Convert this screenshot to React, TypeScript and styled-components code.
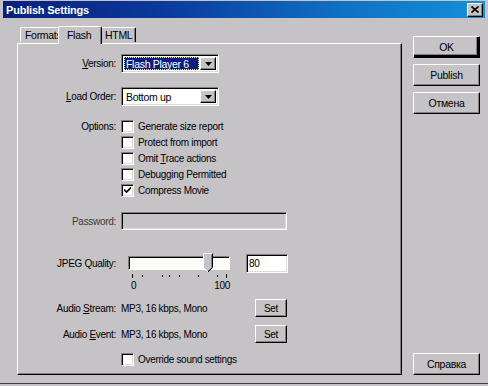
import styled, { createGlobalStyle } from "styled-components";

const GlobalStyle = createGlobalStyle`
    html, body {
        margin: 0;
        padding: 0;
        background: #c5c3c6;
    }
    body {
        font-family: "Liberation Sans", Arial, sans-serif;
        font-size: 10px;
        letter-spacing: -0.3px;
        color: #000;
    }
`

const Window = styled.div`
    width: 488px;
    height: 386px;
    box-sizing: border-box;
    background: #c5c3c6;
    padding: 1px 3px 3px 3px;
    box-shadow: inset 0 -2px #c5c3c6, inset 0 -3px #404040;
    display: flex;
    flex-direction: column;
    overflow: hidden;
`
const TitleBar = styled.div`
    height: 17px;
    flex: 0 0 17px;
    background: linear-gradient(to right, #08207c 0%, #0a3c9e 35%, #1070c4 70%, #1290da 100%);
    display: flex;
    align-items: center;
    padding: 0 2px 0 3px;
`
const Title = styled.div`
    color: #fff;
    font-weight: bold;
    font-size: 11px;
    letter-spacing: -0.2px;
    flex: 1;
`
const CloseBtn = styled.div`
    width: 16px;
    height: 14px;
    box-sizing: border-box;
    background: #c5c3c6;
    border: 1px solid;
    border-color: #fff #000 #000 #fff;
    box-shadow: inset -1px -1px #808080;
    display: flex;
    align-items: center;
    justify-content: center;
`
const Body = styled.div`
    flex: 1;
    display: flex;
    padding: 7px 5px 8px 14px;
    gap: 11px;
`
const LeftCol = styled.div`
    width: 385px;
    display: flex;
    flex-direction: column;
`
const Tabs = styled.div`
    display: flex;
    align-items: flex-end;
    height: 18px;
    padding-left: 3px;
    position: relative;
    z-index: 1;
`
const Tab = styled.div<{ $active?: boolean; $w: number }>`
    width: ${p => p.$w}px;
    height: ${p => (p.$active ? 18 : 15)}px;
    box-sizing: border-box;
    margin-bottom: ${p => (p.$active ? -1 : 1)}px;
    margin-left: ${p => (p.$active ? -2 : 0)}px;
    margin-right: ${p => (p.$active ? -2 : 0)}px;
    background: #c5c3c6;
    border: 1px solid;
    border-bottom: none;
    border-color: #fff #000 transparent #fff;
    box-shadow: inset -1px 0 #808080;
    border-radius: 2px 2px 0 0;
    padding: ${p => (p.$active ? "2px 0 0 8px" : "1px 0 0 4px")};
    white-space: nowrap;
    font-size: 10.5px;
    position: relative;
    z-index: ${p => (p.$active ? 2 : 1)};
`
const Panel = styled.div`
    flex: 1;
    box-sizing: border-box;
    border: 1px solid;
    border-color: #fff #000 #000 #fff;
    box-shadow: inset -1px -1px #808080;
    display: flex;
    flex-direction: column;
`
const Row = styled.div<{ $top: number; $h: number }>`
    display: flex;
    align-items: center;
    margin-top: ${p => p.$top}px;
    height: ${p => p.$h}px;
    gap: 4px;
`
const TopRow = styled(Row)`
    align-items: flex-start;
`
const Label = styled.div<{ $dim?: boolean }>`
    width: 99px;
    flex: 0 0 99px;
    text-align: right;
    white-space: nowrap;
    color: ${p => (p.$dim ? "#3a3a3a" : "#000")};
    padding-right: 1px;
    box-sizing: border-box;
`
const TopLabel = styled(Label)`
    line-height: 14px;
`
const Field = styled.div<{ $w: number; $h: number; $bg?: string }>`
    width: ${p => p.$w}px;
    height: ${p => p.$h}px;
    box-sizing: border-box;
    background: ${p => p.$bg || "#fff"};
    border: 1px solid;
    border-color: #808080 #fff #fff #808080;
    box-shadow: inset 1px 1px #000, inset -1px -1px #dcdcdc;
    display: flex;
    align-items: center;
    padding: 2px;
    white-space: nowrap;
`
const NumField = styled(Field)`
    margin-left: 12px;
`
const SelectText = styled.div<{ $focus?: boolean }>`
    flex: 1;
    height: 100%;
    box-sizing: border-box;
    display: flex;
    align-items: center;
    padding-left: 2px;
    color: ${p => (p.$focus ? "#fff" : "#000")};
    background: ${p => (p.$focus ? "#0a1e82" : "transparent")};
    outline: ${p => (p.$focus ? "1px dotted #e8e8a0" : "none")};
    outline-offset: -1px;
    font-size: 10.5px;
`
const ArrowBtn = styled.div`
    width: 16px;
    height: 100%;
    box-sizing: border-box;
    margin-left: 1px;
    background: #c5c3c6;
    border: 1px solid;
    border-color: #fff #000 #000 #fff;
    box-shadow: inset -1px -1px #808080;
    display: flex;
    align-items: center;
    justify-content: center;
`
const CheckList = styled.div`
    display: flex;
    flex-direction: column;
`
const CheckRow = styled.div`
    display: flex;
    align-items: flex-start;
    height: 16px;
    gap: 4px;
    line-height: 14px;
    white-space: nowrap;
`
const Box = styled.div`
    width: 13px;
    height: 13px;
    flex: 0 0 13px;
    box-sizing: border-box;
    background: #fff;
    border: 1px solid;
    border-color: #808080 #fff #fff #808080;
    box-shadow: inset 1px 1px #000, inset -1px -1px #dcdcdc;
    display: flex;
    align-items: center;
    justify-content: center;
`
const SliderWrap = styled.div`
    margin-left: 7px;
    width: 102px;
    height: 20px;
    position: relative;
    display: flex;
    align-items: center;
`
const Track = styled.div`
    width: 102px;
    height: 14px;
    box-sizing: border-box;
    background: #fbfbf8;
    border: 1px solid;
    border-color: #808080 #fff #fff #808080;
    box-shadow: inset 1px 1px #000;
`
const Thumb = styled.svg`
    position: absolute;
    left: 75px;
    top: 0;
`
const Scale = styled.div`
    margin-left: 110px;
    margin-top: 1px;
    width: 104px;
    display: flex;
    flex-direction: column;
`
const ScaleLabels = styled.div`
    display: flex;
    justify-content: space-between;
    padding: 0 2px 0 3px;
    line-height: 11px;
`
const Value = styled.div`
    width: 130px;
    flex: 0 0 130px;
    white-space: nowrap;
    margin-top: 1px;
`
const SmallBtn = styled.div`
    width: 32px;
    height: 18px;
    box-sizing: border-box;
    background: #c5c3c6;
    border: 1px solid;
    border-color: #fff #000 #000 #fff;
    box-shadow: inset -1px -1px #808080;
    display: flex;
    align-items: center;
    justify-content: center;
`
const RightCol = styled.div`
    width: 67px;
    padding-top: 11px;
    display: flex;
    flex-direction: column;
    gap: 6px;
`
const Button = styled.div<{ $default?: boolean; $bottom?: boolean }>`
    height: 22px;
    flex: 0 0 22px;
    box-sizing: border-box;
    background: #c5c3c6;
    border: 1px solid;
    border-color: #fff #000 #000 #fff;
    box-shadow: ${p => (p.$default ? "inset -2px -2px #000, inset -3px -3px #808080" : "inset -1px -1px #808080")};
    display: flex;
    align-items: center;
    justify-content: center;
    font-size: 10.5px;
    margin-top: ${p => (p.$bottom ? "auto" : "0")};
`

function Arrow() {
    return (
        <svg width="7" height="4" viewBox="0 0 7 4">
            <path d="M0 0h7L3.5 4z" fill="#000" />
        </svg>
    )
}

function Check({ checked }: { checked?: boolean }) {
    return (
        <Box>
            {checked && (
                <svg width="7" height="7" viewBox="0 0 7 7">
                    <path d="M0 2.5l2.5 2.5L7 0.5" stroke="#000" strokeWidth="1.6" fill="none" />
                </svg>
            )}
        </Box>
    )
}

const options = [
    { text: <>Generate size report</>, checked: false },
    { text: <>Protect from import</>, checked: false },
    { text: <>Omit <u>T</u>race actions</>, checked: false },
    { text: <>Debugging Permitted</>, checked: false },
    { text: <>Compress Movie</>, checked: true },
]

const ticks = [4, 14, 34, 41, 51, 70, 89, 98]

export default function App() {
    return (
        <>
            <GlobalStyle />
            <Window>
                <TitleBar>
                    <Title>Publish Settings</Title>
                    <CloseBtn>
                        <svg width="8" height="7" viewBox="0 0 8 7">
                            <path d="M0.5 0.5l7 6M7.5 0.5l-7 6" stroke="#000" strokeWidth="1.6" />
                        </svg>
                    </CloseBtn>
                </TitleBar>
                <Body>
                    <LeftCol>
                        <Tabs>
                            <Tab $w={40}>Formats</Tab>
                            <Tab $w={44} $active>Flash</Tab>
                            <Tab $w={36}>HTML</Tab>
                        </Tabs>
                        <Panel>
                            <Row $top={10} $h={19}>
                                <Label><u>V</u>ersion:</Label>
                                <Field $w={98} $h={19}>
                                    <SelectText $focus>Flash Player 6</SelectText>
                                    <ArrowBtn><Arrow /></ArrowBtn>
                                </Field>
                            </Row>
                            <Row $top={14} $h={19}>
                                <Label><u>L</u>oad Order:</Label>
                                <Field $w={98} $h={19}>
                                    <SelectText>Bottom up</SelectText>
                                    <ArrowBtn><Arrow /></ArrowBtn>
                                </Field>
                            </Row>
                            <TopRow $top={14} $h={80}>
                                <TopLabel>Options:</TopLabel>
                                <CheckList>
                                    {options.map((o, i) => (
                                        <CheckRow key={i}>
                                            <Check checked={o.checked} />
                                            <span>{o.text}</span>
                                        </CheckRow>
                                    ))}
                                </CheckList>
                            </TopRow>
                            <Row $top={12} $h={18}>
                                <Label $dim>Password:</Label>
                                <Field $w={166} $h={18} $bg="#c5c3c6" />
                            </Row>
                            <Row $top={23} $h={20}>
                                <Label>JPEG Quality:</Label>
                                <SliderWrap>
                                    <Track />
                                    <Thumb width="10" height="20" viewBox="0 0 10 20">
                                        <path d="M0.5 0.5h9v14l-4.5 4.5l-4.5-4.5z" fill="#c5c3c6" />
                                        <path d="M0.5 15V0.5h9" stroke="#fff" fill="none" />
                                        <path d="M9.5 0.5v14l-4.5 4.5" stroke="#000" fill="none" />
                                        <path d="M8.5 1.5v13l-3.5 3.5" stroke="#808080" fill="none" />
                                        <path d="M0.5 14.5l4.5 4.5" stroke="#fff" fill="none" />
                                    </Thumb>
                                </SliderWrap>
                                <NumField $w={42} $h={19}>80</NumField>
                            </Row>
                            <Scale>
                                <svg width="104" height="6" viewBox="0 0 104 6">
                                    {ticks.map((x, i) => (
                                        <rect key={x} x={x} y={i === 0 || i === ticks.length - 1 ? 0 : 1} width="1" height={i === 0 || i === ticks.length - 1 ? 4 : 2} fill="#000" />
                                    ))}
                                </svg>
                                <ScaleLabels>
                                    <span>0</span>
                                    <span>100</span>
                                </ScaleLabels>
                            </Scale>
                            <Row $top={8} $h={18}>
                                <Label>Audio <u>S</u>tream:</Label>
                                <Value>MP3, 16 kbps, Mono</Value>
                                <SmallBtn>Set</SmallBtn>
                            </Row>
                            <Row $top={8} $h={18}>
                                <Label>Audio <u>E</u>vent:</Label>
                                <Value>MP3, 16 kbps, Mono</Value>
                                <SmallBtn>Set</SmallBtn>
                            </Row>
                            <TopRow $top={10} $h={16}>
                                <Label />
                                <CheckRow>
                                    <Check />
                                    <span>Override sound settings</span>
                                </CheckRow>
                            </TopRow>
                        </Panel>
                    </LeftCol>
                    <RightCol>
                        <Button $default>OK</Button>
                        <Button>Publish</Button>
                        <Button>Отмена</Button>
                        <Button $bottom>Справка</Button>
                    </RightCol>
                </Body>
            </Window>
        </>
    )
}
